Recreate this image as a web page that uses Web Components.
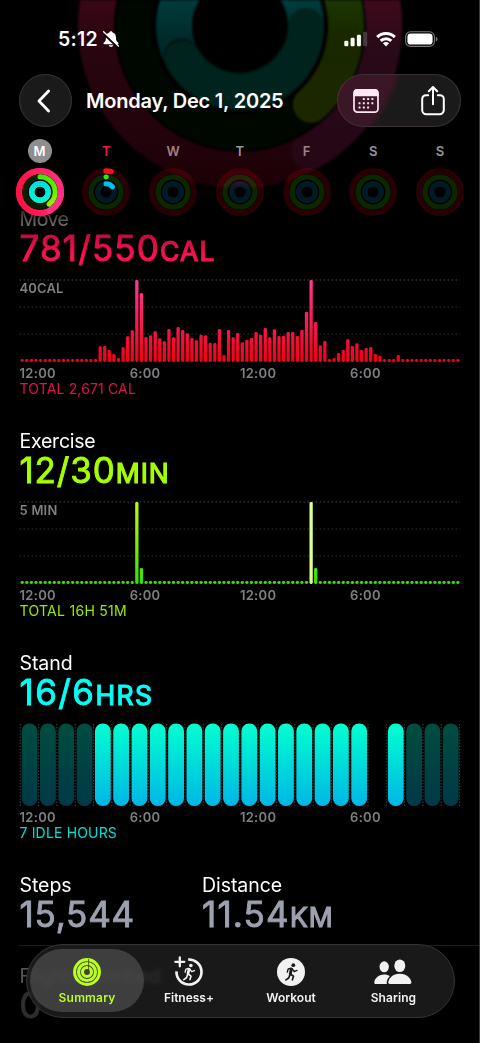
<!DOCTYPE html>
<html lang="en">
<head>
<meta charset="utf-8">
<title>Summary</title>
<style>
  html, body { margin: 0; background: #000; }
  body {
    width: 480px;
    height: 1043px;
    overflow: hidden;
    font-family: Inter, "Liberation Sans", sans-serif;
    color: #fff;
  }
</style>
</head>
<body>
<fitness-app></fitness-app>

<script>
// Angle in degrees, clockwise from 12 o'clock
function polar(cx, cy, r, deg) {
  const a = (deg - 90) * Math.PI / 180;
  return [(cx + r * Math.cos(a)).toFixed(2), (cy + r * Math.sin(a)).toFixed(2)];
}

function arc(cx, cy, r, from, to) {
  const [x0, y0] = polar(cx, cy, r, from);
  const [x1, y1] = polar(cx, cy, r, to);
  return `M${x0} ${y0}A${r} ${r} 0 ${to - from > 180 ? 1 : 0} 1 ${x1} ${y1}`;
}

// <fit-text w="120">: spreads its letters over a given width
class FitText extends HTMLElement {
  connectedCallback() {
    if (this.shadowRoot) return;
    this.attachShadow({ mode: "open" }).innerHTML = `
      <style>:host { display: inline-block; white-space: nowrap; }</style>
      <slot></slot>
    `;
    const w = Number(this.getAttribute("w"));
    const natural = this.getBoundingClientRect().width;
    const count = this.textContent.trim().length;
    if (w && natural) this.style.letterSpacing = `${((w - natural) / count).toFixed(3)}px`;
  }
}
customElements.define("fit-text", FitText);

// Big faded rings behind the header
class RingBackdrop extends HTMLElement {
  connectedCallback() {
    this.attachShadow({ mode: "open" }).innerHTML = `
      <style>
        :host { display: block; height: 200px; }
        svg { display: block; filter: blur(1.2px); }
      </style>
      <svg width="479" height="200" viewBox="0 0 479 200" fill="none">
        <defs>
          <linearGradient id="r" x1="0" y1="0" x2="0" y2="190" gradientUnits="userSpaceOnUse">
            <stop offset="0" stop-color="#3a0716"/><stop offset=".2" stop-color="#2a0610"/>
            <stop offset=".75" stop-color="#22030b"/><stop offset="1" stop-color="#1c0006"/>
          </linearGradient>
          <linearGradient id="p" x1="0" y1="0" x2="0" y2="190" gradientUnits="userSpaceOnUse">
            <stop offset="0" stop-color="#3d0a1c"/><stop offset=".25" stop-color="#2a0a18"/>
            <stop offset="1" stop-color="#240616"/>
          </linearGradient>
          <linearGradient id="g" x1="0" y1="0" x2="0" y2="120" gradientUnits="userSpaceOnUse">
            <stop offset="0" stop-color="#1c3600"/><stop offset=".3" stop-color="#182800"/>
            <stop offset="1" stop-color="#1d2700"/>
          </linearGradient>
          <linearGradient id="c" x1="0" y1="0" x2="0" y2="110" gradientUnits="userSpaceOnUse">
            <stop offset="0" stop-color="#003c3c"/><stop offset=".35" stop-color="#002a2a"/>
            <stop offset="1" stop-color="#00211e"/>
          </linearGradient>
        </defs>
        <circle cx="240" cy="26" r="144" stroke="url(#r)" stroke-width="36"/>
        <path d="${arc(240, 26, 144, 0, 151)}" stroke="url(#p)" stroke-width="36" stroke-linecap="round"/>
        <circle cx="240" cy="26" r="106" stroke="#000600" stroke-width="36"/>
        <path d="${arc(240, 26, 106, 0, 138)}" stroke="url(#g)" stroke-width="36" stroke-linecap="round"/>
        <circle cx="240" cy="26" r="66" stroke="url(#c)" stroke-width="36"/>
        <path d="${arc(240, 26, 66, 120, 241)}" stroke="#00160f" stroke-width="36" stroke-linecap="round" transform="translate(-.8 -1.6)"/>
        <path d="${arc(240, 26, 66, 90, 240)}" stroke="#00231d" stroke-width="36" stroke-linecap="round"/>
      </svg>
    `;
  }
}
customElements.define("ring-backdrop", RingBackdrop);

class StatusBar extends HTMLElement {
  connectedCallback() {
    this.attachShadow({ mode: "open" }).innerHTML = `
      <style>
        :host { display: flex; align-items: center; height: 74px; padding: 15px 41px 11px 58px; box-sizing: border-box; }
        .time { font-size: 19.500px; font-weight: 600; line-height: 24px; }
        svg { display: block; }
        .bell { margin-left: 4px; }
        .right { display: flex; align-items: center; margin-left: auto; }
        .wifi { margin-left: 8px; }
        .battery { margin-left: 9px; }
      </style>
      <fit-text class="time" w="40">5:12</fit-text>
      <svg class="bell" width="18" height="18" viewBox="0 0 18 18">
        <path d="M9 1.2c-.9 0-1.5.6-1.6 1.4C5.100 3.300 4 5.200 4 7.500c0 2.700-.7 4.100-2.200 5.300-.6.5-.3 1.500.5 1.500h13.400c.8 0 1.100-1 .5-1.500C14.700 11.600 14 10.200 14 7.500c0-2.300-1.100-4.200-3.400-4.900C10.500 1.800 9.900 1.200 9 1.200z" fill="#fff"/>
        <path d="M6.800 15.200h4.400c-.3 1-1.100 1.600-2.200 1.600s-1.900-.6-2.200-1.600z" fill="#fff"/>
        <path d="M.8 2.800 15.500 17" stroke="#16040a" stroke-width="2.400"/>
        <path d="M1.600 1.800 16.500 16" stroke="#fff" stroke-width="1.300" stroke-linecap="round"/>
      </svg>
      <div class="right">
        <svg width="24" height="16" viewBox="0 0 24 16" fill="#fff">
          <rect x=".3" y="9.700" width="4" height="5.500" rx="1.200"/>
          <rect x="6.600" y="6.800" width="4" height="8.400" rx="1.200"/>
          <rect x="12.900" y="3.700" width="4" height="11.500" rx="1.200"/>
          <rect x="19.200" y=".8" width="4" height="14.400" rx="1.200" fill="#4a3840"/>
        </svg>
        <svg class="wifi" width="20" height="16" viewBox="0 0 20 16" fill="none" stroke="#fff" stroke-width="3">
          <path d="M1.200 6.100a12.600 12.600 0 0 1 17.600 0"/>
          <path d="M4.700 9.900a7.600 7.600 0 0 1 10.600 0"/>
          <path d="M10 15.400 6.900 12.200a4.300 4.300 0 0 1 6.200 0z" fill="#fff" stroke="none"/>
        </svg>
        <svg class="battery" width="33" height="16" viewBox="0 0 33 16">
          <rect x=".6" y=".8" width="28.800" height="14.600" rx="5" fill="none" stroke="#777" stroke-width="1.100"/>
          <rect x="2.400" y="2.600" width="25.200" height="11" rx="3.400" fill="#fff"/>
          <path d="M30.800 5.700c1.200.5 1.800 1.400 1.800 2.400s-.6 1.900-1.800 2.400z" fill="#777"/>
        </svg>
      </div>
    `;
  }
}
customElements.define("status-bar", StatusBar);

class DayHeader extends HTMLElement {
  connectedCallback() {
    this.attachShadow({ mode: "open" }).innerHTML = `
      <style>
        :host { display: flex; align-items: center; height: 53px; padding: 0 18px 0 19px; }
        svg { display: block; }
        .glass { box-sizing: border-box; border: 1px solid #373737; background: #1a1a1a; border-radius: 27px; height: 53px; }
        .back { width: 53px; display: grid; place-items: center; }
        .back svg { margin-right: 3px; }
        .title { font-size: 20px; font-weight: 600; line-height: 24px; margin-left: 14px; }
        .actions {
          width: 124px;
          margin-left: auto;
          display: flex;
          align-items: center;
          justify-content: space-between;
          padding: 0 14px 0 15px;
          border-color: #3d3036 #353535 #3b3237 #5a2a38;
          background: radial-gradient(circle at -97px -48px, #3b1626 160px, #1a1a1a 168px);
        }
      </style>
      <div class="glass back">
        <svg width="20" height="26" viewBox="0 0 20 26" fill="none" stroke="#fff" stroke-width="2.800" stroke-linecap="round" stroke-linejoin="round">
          <path d="M14.600 3 5 13l9.600 10"/>
        </svg>
      </div>
      <fit-text class="title" w="197.500">Monday, Dec 1, 2025</fit-text>
      <div class="glass actions">
        <svg width="26" height="26" viewBox="0 0 26 26">
          <rect x="1" y="1.800" width="24" height="22.400" rx="3.400" fill="none" stroke="#ffe8f4" stroke-width="1.700"/>
          <path d="M.4 8.200V5A4 4 0 0 1 4.400 1h17.200a4 4 0 0 1 4 4v3.200z" fill="#ffe8f4"/>
          <g fill="#ffe8f4">
            ${[[1, 0], [2, 0], [3, 0], [0, 1], [1, 1], [2, 1], [3, 1], [0, 2], [1, 2], [2, 2]]
              .map(([c, r]) => `<rect x="${5.500 + c * 4.300}" y="${10 + r * 4.200}" width="2" height="2" rx=".5"/>`).join("")}
          </g>
        </svg>
        <svg width="26" height="30" viewBox="0 0 26 30" fill="none" stroke="#fff" stroke-width="2" stroke-linecap="round" stroke-linejoin="round">
          <path d="M8.200 9.200H6a3.800 3.800 0 0 0-3.800 3.800v11A4.200 4.200 0 0 0 6.400 28.200h13.200a4.200 4.200 0 0 0 4.200-4.200V13A3.800 3.800 0 0 0 20 9.200h-2.200"/>
          <path d="M13 18.200V1.200M8.800 5.200 13 1 17.200 5.200"/>
        </svg>
      </div>
    `;
  }
}
customElements.define("day-header", DayHeader);

// One weekday with its three rings. state: "done", "partial" or none
class DayRings extends HTMLElement {
  connectedCallback() {
    const state = this.getAttribute("state");
    const done = state === "done";
    const tracks = done
      ? ["#ff1044", "#0b2000", "#00e5d0"]
      : ["rgba(255,0,22,.15)", "rgba(60,230,0,.17)", "rgba(0,160,220,.17)"];
    let arcs = "";
    if (done) {
      arcs = `
        <circle cx="25" cy="25" r="21" stroke="url(#m)" stroke-width="6"/>
        <path d="${arc(25, 25, 21, 90, 152)}" stroke="#ff2f86" stroke-width="6" stroke-linecap="round"/>
        <path d="${arc(25, 25, 15.200, 0, 143)}" stroke="url(#e)" stroke-width="5" stroke-linecap="round"/>
        <circle cx="25" cy="25" r="8.300" stroke="url(#s)" stroke-width="5.400"/>`;
    } else if (state === "partial") {
      arcs = `
        <path d="${arc(25, 25, 21, 0, 14)}" stroke="#fa0a1e" stroke-width="5.400" stroke-linecap="round"/>
        <path d="${arc(25, 25, 15, 0, 1)}" stroke="#40e010" stroke-width="5" stroke-linecap="round"/>
        <path d="${arc(25, 25, 8.300, 0, 52)}" stroke="#00c0f0" stroke-width="5" stroke-linecap="round"/>`;
    }
    this.attachShadow({ mode: "open" }).innerHTML = `
      <style>
        :host { display: flex; flex-direction: column; align-items: center; color: #96969a; }
        .letter {
          width: 24px;
          height: 24px;
          border-radius: 12px;
          font-size: 13px;
          font-weight: 600;
          line-height: 24px;
          text-align: center;
          margin-bottom: 4px;
        }
        .letter.done { background: #8e8e90; color: #fff; }
        svg { display: block; }
      </style>
      <div class="letter ${done ? "done" : ""}"><slot></slot></div>
      <svg width="50" height="50" viewBox="0 0 50 50" fill="none">
        <defs>
          <linearGradient id="m" x1="0" y1=".6" x2="1" y2=".4"><stop offset="0" stop-color="#ff1240"/><stop offset="1" stop-color="#ff2d84"/></linearGradient>
          <linearGradient id="e" x1="0" y1="0" x2="0" y2="1"><stop offset="0" stop-color="#48e800"/><stop offset="1" stop-color="#8df400"/></linearGradient>
          <linearGradient id="s" x1="0" y1="0" x2="0" y2="1"><stop offset="0" stop-color="#00e0e0"/><stop offset="1" stop-color="#00f5d2"/></linearGradient>
        </defs>
        ${done ? `<circle cx="25" cy="25" r="22" fill="#000"/>` : ""}
        <circle cx="25" cy="25" r="21" stroke="${tracks[0]}" stroke-width="6"/>
        <circle cx="25" cy="25" r="15" stroke="${tracks[1]}" stroke-width="5.200"/>
        <circle cx="25" cy="25" r="8.300" stroke="${tracks[2]}" stroke-width="5.400"/>
        ${arcs}
      </svg>
    `;
  }
}
customElements.define("day-rings", DayRings);

class WeekStrip extends HTMLElement {
  connectedCallback() {
    this.attachShadow({ mode: "open" }).innerHTML = `
      <style>
        :host { display: grid; grid-template-columns: repeat(7, 66.750px); margin: 12px 0 0 6.200px; height: 78px; }
        .today { color: #f5164b; }
        .tint { color: #a07f88; }
      </style>
      <day-rings state="done">M</day-rings>
      <day-rings state="partial" class="today">T</day-rings>
      <day-rings class="tint">W</day-rings>
      <day-rings>T</day-rings>
      <day-rings class="tint">F</day-rings>
      <day-rings>S</day-rings>
      <day-rings>S</day-rings>
    `;
  }
}
customElements.define("week-strip", WeekStrip);

// Title and large value with a small unit
class MetricValue extends HTMLElement {
  connectedCallback() {
    const num = this.getAttribute("num");
    const unit = this.getAttribute("unit") || "";
    this.attachShadow({ mode: "open" }).innerHTML = `
      <style>
        :host { display: block; padding-left: 19.500px; }
        .title { font-size: 19.500px; line-height: 26px; height: 26px; color: #fff; }
        .value {
          font-size: 35px;
          line-height: 32px;
          height: 32px;
          color: var(--accent);
          -webkit-text-stroke: .9px var(--accent);
          stroke-linejoin: round;
        }
        .unit { font-size: 26.500px; -webkit-text-stroke-width: 1.200px; }
      </style>
      <div class="title"><fit-text w="${this.getAttribute("title-w")}">${this.getAttribute("label")}</fit-text></div>
      <div class="value"><fit-text w="${this.getAttribute("value-w")}">${num}<span class="unit">${unit}</span></fit-text></div>
    `;
  }
}
customElements.define("metric-value", MetricValue);

const MOVE = [
  ...Array(17).fill(3), 15.700, 16, 12, 8, 4, 14.700, 25.700, 31.700, 82, 69, 25, 26.700, 30.700, 23.700,
  21, 33, 24.700, 35, 32, 28.700, 24, 21.700, 27.300, 26.700, 19.300, 19, 33, 7, 32, 24.700, 29, 19.700,
  22.300, 24, 30, 27.300, 34, 24.700, 32.700, 26, 26.300, 30, 30, 26, 32, 50.300, 82, 40, 16.700, 21, 3,
  4, 9, 12, 22.700, 16, 18.700, 12, 14, 15, 8, 6.300, 3, 3, 3, 7, ...Array(13).fill(3)
];
const EXERCISE = Array(96).fill(3);
EXERCISE[25] = EXERCISE[63] = 82;
EXERCISE[26] = EXERCISE[64] = 16;

// 24 hours, one letter each: d = idle, s = stood, - = no data
const STAND = "ddddsssssssssssssss-sddd";

class ActivityChart extends HTMLElement {
  bars(data, highlight) {
    return data.map((h, i) => {
      const x = 22.200 + i * 4.586 - 1.650;
      const fill = i === highlight ? "#dcff8a" : "url(#bar)";
      return `<rect x="${x.toFixed(2)}" y="${(82 - h).toFixed(2)}" width="3.300" height="${h}" rx="1.400" fill="${fill}"/>`;
    }).join("");
  }

  grid() {
    return [0, 27, 54].map((y, i) =>
      `<path d="M19.500 ${y}H460" stroke="${i ? "#303030" : "#484848"}" stroke-width="1.200" stroke-dasharray="1.600 2.400"/>`
    ).join("");
  }

  stand() {
    let out = "";
    for (let i = 0; i <= 24; i++) {
      out += `<path d="M${(20.300 + i * 18.300).toFixed(1)} 0V82" stroke="#3c3c3c" stroke-width="1.100" stroke-dasharray="1.400 1.700"/>`;
    }
    [...STAND].forEach((s, i) => {
      if (s === "-") return;
      const x = (21.700 + i * 18.310).toFixed(2);
      out += `<rect x="${x}" y="-.5" width="15.800" height="82.500" rx="7.600" fill="url(#${s === "s" ? "bar" : "idle"})"/>`;
    });
    return out;
  }

  connectedCallback() {
    const kind = this.getAttribute("kind");
    const body = kind === "stand" ? this.stand()
      : this.grid() + (kind === "move" ? this.bars(MOVE) : this.bars(EXERCISE, 63));
    const scale = this.getAttribute("scale");
    this.attachShadow({ mode: "open" }).innerHTML = `
      <style>
        :host { display: block; }
        .plot { display: grid; }
        .plot > * { grid-area: 1 / 1; }
        svg { display: block; overflow: visible; }
        .scale, .axis { font-size: 13px; font-weight: 600; color: #7f7f84; }
        .scale { line-height: 17px; padding-left: 19.500px; }
        .axis { display: grid; grid-template-columns: repeat(4, 110.200px); padding-left: 19.500px; height: 19px; line-height: 20px; }
        .total { padding-left: 19.500px; font-size: 14px; line-height: 14px; height: 14px; color: var(--total); }
      </style>
      <div class="plot">
        <svg width="479" height="83" viewBox="0 0 479 83">
          <defs>
            <linearGradient id="bar" x1="0" y1="0" x2="0" y2="82" gradientUnits="userSpaceOnUse">
              <stop offset="0" stop-color="${this.getAttribute("from")}"/>
              <stop offset="1" stop-color="${this.getAttribute("to")}"/>
            </linearGradient>
            <linearGradient id="idle" x1="0" y1="0" x2="0" y2="82" gradientUnits="userSpaceOnUse">
              <stop offset="0" stop-color="#004d40"/><stop offset="1" stop-color="#003947"/>
            </linearGradient>
          </defs>
          ${body}
        </svg>
        ${scale ? `<div class="scale"><fit-text w="${this.getAttribute("scale-w")}">${scale}</fit-text></div>` : ""}
      </div>
      <div class="axis">
        <span><fit-text w="36.500">12:00</fit-text></span>
        <span><fit-text w="30.800">6:00</fit-text></span>
        <span><fit-text w="36.500">12:00</fit-text></span>
        <span><fit-text w="30.800">6:00</fit-text></span>
      </div>
      <div class="total"><fit-text w="${this.getAttribute("total-w")}">${this.getAttribute("total")}</fit-text></div>
    `;
  }
}
customElements.define("activity-chart", ActivityChart);

class DaySummary extends HTMLElement {
  connectedCallback() {
    this.attachShadow({ mode: "open" }).innerHTML = `
      <style>
        :host {
          display: block;
          margin-top: -11px;
          -webkit-mask-image: linear-gradient(rgba(0,0,0,.15) 4px, rgba(0,0,0,.46) 20px, rgba(0,0,0,.8) 30px, #000 48px);
          mask-image: linear-gradient(rgba(0,0,0,.15) 4px, rgba(0,0,0,.46) 20px, rgba(0,0,0,.8) 30px, #000 48px);
        }
        section { height: 222px; }
        section metric-value { margin-bottom: 16px; }
        .move { --accent: #fa114f; --total: #e3104a; }
        .exercise { --accent: #a6ff00; --total: #98ea00; }
        .stand { --accent: #00fff6; --total: #00e0d8; }
        .row { display: grid; grid-template-columns: 182.500px 1fr; --accent: #9da1af; height: 73px; }
        .row.next { border-top: 1px solid #1c1c1c; margin-left: 19px; padding-top: 17px; }
        .row.next metric-value { margin-left: -19px; opacity: .34; --accent: #85878f; }
      </style>
      <section class="move">
        <metric-value label="Move" title-w="49" num="781/550" unit="CAL" value-w="196"></metric-value>
        <activity-chart kind="move" from="#ff3796" to="#f00014" scale="40CAL" scale-w="44" total="TOTAL 2,671 CAL" total-w="116.500"></activity-chart>
      </section>
      <section class="exercise">
        <metric-value label="Exercise" title-w="76" num="12/30" unit="MIN" value-w="150"></metric-value>
        <activity-chart kind="exercise" from="#bfff00" to="#35e000" scale="5 MIN" scale-w="38" total="TOTAL 16H 51M" total-w="107.500"></activity-chart>
      </section>
      <section class="stand">
        <metric-value label="Stand" title-w="53" num="16/6" unit="HRS" value-w="134"></metric-value>
        <activity-chart kind="stand" from="#00ffd0" to="#00b6e6" total="7 IDLE HOURS" total-w="97.500"></activity-chart>
      </section>
      <div class="row">
        <metric-value label="Steps" title-w="52" num="15,544" value-w="115.500"></metric-value>
        <metric-value label="Distance" title-w="80" num="11.54" unit="KM" value-w="132"></metric-value>
      </div>
      <div class="row next">
        <metric-value label="Flights Climbed" title-w="141" num="0" value-w="23"></metric-value>
      </div>
    `;
  }
}
customElements.define("day-summary", DaySummary);

const RUNNER = `
  <circle cx="16.300" cy="7.200" r="1.900" fill="currentColor" stroke="none"/>
  <g fill="none" stroke="currentColor" stroke-linecap="round" stroke-linejoin="round">
    <path d="M14.400 11.200 13.300 15.800" stroke-width="2.900"/>
    <path d="M14 10.200 11.200 11 10.300 14.100M15.200 10.900 17.200 13.500 20 12.400" stroke-width="1.400"/>
    <path d="M13.700 16.200 16.500 18.200 15.400 21.800M12.900 16.900 11.700 20 8.900 21.900" stroke-width="1.700"/>
  </g>`;

const ICONS = {
  summary: `
    <svg width="28" height="28" viewBox="0 0 28 28" fill="none" stroke="currentColor">
      <circle cx="14" cy="14" r="12.400" stroke-width="3.100"/>
      <circle cx="14" cy="14" r="8.500" stroke-width="3.200"/>
      <circle cx="14" cy="14" r="4.500" stroke-width="3.200"/>
      <path d="M15.600 1V12" stroke="#3d3d3d" stroke-width=".8"/>
    </svg>`,
  fitness: `
    <svg width="28" height="28" viewBox="0 0 28 28">
      <path d="${arc(14, 14, 12.500, -4, 273)}" fill="none" stroke="currentColor" stroke-width="2.700"/>
      <path d="M4.800-.7v9M.3 3.800h9" fill="none" stroke="currentColor" stroke-width="2.300" stroke-linecap="round"/>
      <g transform="translate(.2 .6) scale(.96)">${RUNNER}</g>
    </svg>`,
  workout: `
    <svg width="28" height="28" viewBox="0 0 28 28">
      <circle cx="14" cy="14" r="14" fill="currentColor"/>
      <g color="#1a1a1a">${RUNNER}</g>
    </svg>`,
  sharing: `
    <svg width="38" height="28" viewBox="0 0 38 28" fill="currentColor">
      <ellipse cx="10.200" cy="8.800" rx="4.700" ry="5.500"/>
      <path d="M1.600 26C.8 26 .3 25.500.3 24.700c0-3.700 4-8.200 9.900-8.200 2.300 0 4.200.6 5.700 1.600-2.100 2.100-3.200 4.600-3.200 6.600 0 .5.1.9.3 1.300z"/>
      <ellipse cx="25.800" cy="7.800" rx="5.500" ry="6.300"/>
      <path d="M15.800 26c-1 0-1.600-.5-1.600-1.400 0-3.800 4.500-8.900 11.600-8.900s11.600 5.100 11.600 8.900c0 .9-.6 1.400-1.600 1.400z"/>
    </svg>`
};

class TabItem extends HTMLElement {
  connectedCallback() {
    const active = this.hasAttribute("active");
    this.attachShadow({ mode: "open" }).innerHTML = `
      <style>
        :host { display: block; color: #f2f2f2; }
        .tab {
          display: flex;
          flex-direction: column;
          align-items: center;
          box-sizing: border-box;
          height: 63px;
          padding-top: 9px;
          border-radius: 32px;
        }
        .tab.active { margin: 0 -6px; background: rgba(80,80,80,.68); color: #baff1e; }
        svg { display: block; overflow: visible; }
        .label { font-size: 12px; font-weight: 600; line-height: 16px; margin-top: 4px; }
      </style>
      <div class="tab ${active ? "active" : ""}">
        ${ICONS[this.getAttribute("icon")]}
        <fit-text class="label" w="${this.getAttribute("w")}">${this.getAttribute("label")}</fit-text>
      </div>
    `;
  }
}
customElements.define("tab-item", TabItem);

class TabBar extends HTMLElement {
  connectedCallback() {
    this.attachShadow({ mode: "open" }).innerHTML = `
      <style>
        :host {
          display: grid;
          grid-template-columns: 102.200px 101.600px 102.600px 102.200px;
          box-sizing: border-box;
          width: 429px;
          height: 74px;
          padding: 4px 9px 0;
          border: 1px solid #343434;
          border-radius: 37px;
          background: rgba(36,36,36,.7);
          -webkit-backdrop-filter: blur(2px);
          backdrop-filter: blur(2px);
        }
      </style>
      <tab-item icon="summary" label="Summary" w="57" active></tab-item>
      <tab-item icon="fitness" label="Fitness+" w="50"></tab-item>
      <tab-item icon="workout" label="Workout" w="49.500"></tab-item>
      <tab-item icon="sharing" label="Sharing" w="45.500"></tab-item>
    `;
  }
}
customElements.define("tab-bar", TabBar);

class FitnessApp extends HTMLElement {
  connectedCallback() {
    this.attachShadow({ mode: "open" }).innerHTML = `
      <style>
        :host {
          display: block;
          position: relative;
          width: 479px;
          height: 1043px;
          overflow: hidden;
          background: #000;
          border-right: 1px solid #3c3c3c;
        }
        ring-backdrop { position: absolute; top: 0; left: 0; }
        .top { position: relative; z-index: 1; }
        /* floats over the scrolled summary */
        tab-bar { position: absolute; left: 26px; top: 944px; }
      </style>
      <ring-backdrop></ring-backdrop>
      <div class="top">
        <status-bar></status-bar>
        <day-header></day-header>
        <week-strip></week-strip>
      </div>
      <day-summary></day-summary>
      <tab-bar></tab-bar>
    `;
  }
}
customElements.define("fitness-app", FitnessApp);
</script>
</body>
</html>
